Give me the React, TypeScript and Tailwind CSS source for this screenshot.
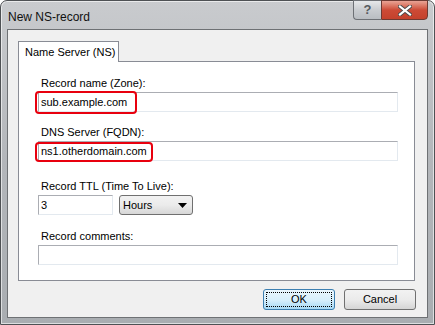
export default function App() {
  return (
    <div className="w-[435px] h-[325px] overflow-hidden bg-white font-['Liberation_Sans',Arial,sans-serif] text-[11px] text-black">
      <div className="relative w-[435px] h-[325px] rounded-t-[7px] border border-[#4e5154] bg-gradient-to-b from-[#c9cbce] via-[#b3b6ba] to-[#a9adb1] shadow-[inset_0_0_0_1px_rgba(255,255,255,0.6)]">
        {/* title bar */}
        <div className="h-[28px] flex items-start pl-[7px] pt-[7px] text-[12px] text-[#111]">New NS-record</div>
        <div className="absolute top-[-1px] right-[6px] flex h-[20px]">
          <div className="w-[28px] h-[20px] border border-[#6d7075] border-r-0 rounded-bl-[4px] bg-gradient-to-b from-[#e6e8ea] via-[#c9ccd0] to-[#b9bdc2] flex items-center justify-center text-[13px] font-bold text-[#555a60]">?</div>
          <div className="w-[47px] h-[20px] border border-[#6d3a33] rounded-br-[4px] bg-gradient-to-b from-[#e8a395] via-[#cc4a36] to-[#c4412c] flex items-center justify-center">
            <svg width="14" height="11" viewBox="0 0 14 11">
              <path d="M2 1.5 L12 9.5 M12 1.5 L2 9.5" stroke="#4a4a4a" strokeWidth="4" strokeLinecap="square" />
              <path d="M2 1.5 L12 9.5 M12 1.5 L2 9.5" stroke="#ffffff" strokeWidth="2.2" strokeLinecap="square" />
            </svg>
          </div>
        </div>

        {/* client area */}
        <div className="ml-[6px] w-[421px] h-[289px] border border-[#6e7174] bg-[#f0f0f0] pt-[10px] px-[10px] flex flex-col">
          <div className="h-[21px] flex items-end">
            <div className="h-[21px] w-[101px] whitespace-nowrap border border-b-0 border-[#898c95] bg-white flex items-center pl-[6px] relative top-[1px] z-10">Name Server (NS)</div>
          </div>
          <div className="w-[397px] h-[220px] border border-[#898c95] bg-white pl-[19px] pt-[13px] flex flex-col">
            <div className="pl-[3px] h-[16px]">Record name (Zone):</div>
            <div className="relative mt-[1px] w-[360px] h-[20px] border border-[#abadb3] border-r-[#e3e9ef] border-b-[#e3e9ef] bg-white pl-[2px] flex items-center">
              sub.example.com
              <div className="absolute left-[-4px] top-[-2px] w-[102px] h-[23px] border-[2px] border-[#e8000e] rounded-[4px]" />
            </div>
            <div className="pl-[3px] h-[16px] mt-[12px]">DNS Server (FQDN):</div>
            <div className="relative mt-[1px] w-[360px] h-[20px] border border-[#abadb3] border-r-[#e3e9ef] border-b-[#e3e9ef] bg-white pl-[2px] flex items-center">
              ns1.otherdomain.com
              <div className="absolute left-[-4px] top-[0px] w-[118px] h-[20px] border-[2px] border-[#e8000e] rounded-[4px]" />
            </div>
            <div className="pl-[3px] h-[16px] mt-[17px]">Record TTL (Time To Live):</div>
            <div className="mt-[1px] flex gap-[6px]">
              <div className="w-[75px] h-[20px] border border-[#abadb3] border-r-[#e3e9ef] border-b-[#e3e9ef] bg-white pl-[2px] flex items-center">3</div>
              <div className="w-[74px] h-[20px] border border-[#707070] rounded-[3px] bg-gradient-to-b from-[#f2f2f2] via-[#ebebeb] to-[#d7d7d7] pl-[3px] pr-[5px] flex items-center justify-between">
                <span>Hours</span>
                <svg width="9" height="5" viewBox="0 0 9 5"><path d="M0 0 H9 L4.5 5 Z" fill="#000" /></svg>
              </div>
            </div>
            <div className="pl-[3px] h-[16px] mt-[13px]">Record comments:</div>
            <div className="mt-[1px] w-[360px] h-[20px] border border-[#abadb3] border-r-[#e3e9ef] border-b-[#e3e9ef] bg-white" />
          </div>
          <div className="flex justify-end gap-[9px] mt-[8px] pr-[1px]">
            <div className="w-[72px] h-[21px] border border-[#3c7fb1] rounded-[3px] bg-gradient-to-b from-[#eaf6fd] via-[#d9f0fc] to-[#a7d9f5] p-[2px]">
              <div className="w-full h-full border border-dotted border-black flex items-center justify-center">OK</div>
            </div>
            <div className="w-[72px] h-[21px] border border-[#707070] rounded-[3px] bg-gradient-to-b from-[#f2f2f2] via-[#ebebeb] to-[#d5d5d5] flex items-center justify-center">Cancel</div>
          </div>
        </div>
      </div>
    </div>
  );
}
